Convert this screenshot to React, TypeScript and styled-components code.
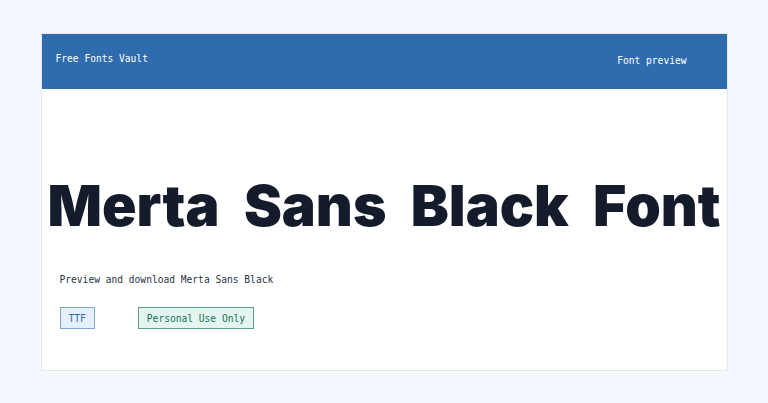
import React from 'react';
import styled, { createGlobalStyle } from 'styled-components';

const GlobalStyle = createGlobalStyle`
  html, body {
    margin: 0;
    padding: 0;
    background: #f5f9ff;
  }
  body {
    font-family: "DejaVu Sans Mono", "Liberation Mono", monospace;
  }
`;

const Page = styled.div`
  padding: 33px 0;
`;

const Card = styled.article`
  width: 687px;
  margin: 0 auto;
  background: #ffffff;
  border: 1px solid #e3e8f0;
  box-sizing: border-box;
`;

const Header = styled.header`
  height: 55px;
  background: #2f6cad;
  display: flex;
  align-items: center;
  justify-content: space-between;
  padding: 0 40px 0 14px;
  color: #ffffff;
  font-size: 9.6px;
`;

const Brand = styled.span`
  margin-top: -6px;
`;

const NavLabel = styled.span`
  margin-top: -2px;
`;

const Body = styled.section`
  padding: 88px 18px 41px;
  display: flex;
  flex-direction: column;
`;

const Title = styled.h1`
  margin: 0 -18px 1px;
  text-align: center;
  white-space: nowrap;
  font-family: Inter, "Liberation Sans", sans-serif;
  font-weight: 900;
  font-size: 57px;
  line-height: 58px;
  word-spacing: 13px;
  color: #141b2b;
`;

const Description = styled.p`
  margin: 38px 0 0;
  font-size: 9.6px;
  line-height: 12px;
  color: #2b3445;
`;

const Badges = styled.div`
  margin-top: 21px;
  display: flex;
  gap: 43px;
`;

const Badge = styled.span<{ $tone: 'blue' | 'green' }>`
  height: 22px;
  box-sizing: border-box;
  display: inline-flex;
  align-items: center;
  padding: 0 8px;
  font-size: 9.6px;
  border: 1px solid ${(p) => (p.$tone === 'blue' ? '#7fa6d6' : '#5d9f8f')};
  background: ${(p) => (p.$tone === 'blue' ? '#e6f0fc' : '#e4f5ef')};
  color: ${(p) => (p.$tone === 'blue' ? '#2f6cad' : '#17705d')};
`;

const App = () => {
  return (
    <Page>
      <GlobalStyle />
      <Card>
        <Header>
          <Brand>Free Fonts Vault</Brand>
          <NavLabel>Font preview</NavLabel>
        </Header>
        <Body>
          <Title>Merta Sans Black Font</Title>
          <Description>Preview and download Merta Sans Black</Description>
          <Badges>
            <Badge $tone="blue">TTF</Badge>
            <Badge $tone="green">Personal Use Only</Badge>
          </Badges>
        </Body>
      </Card>
    </Page>
  );
};

export default App;
